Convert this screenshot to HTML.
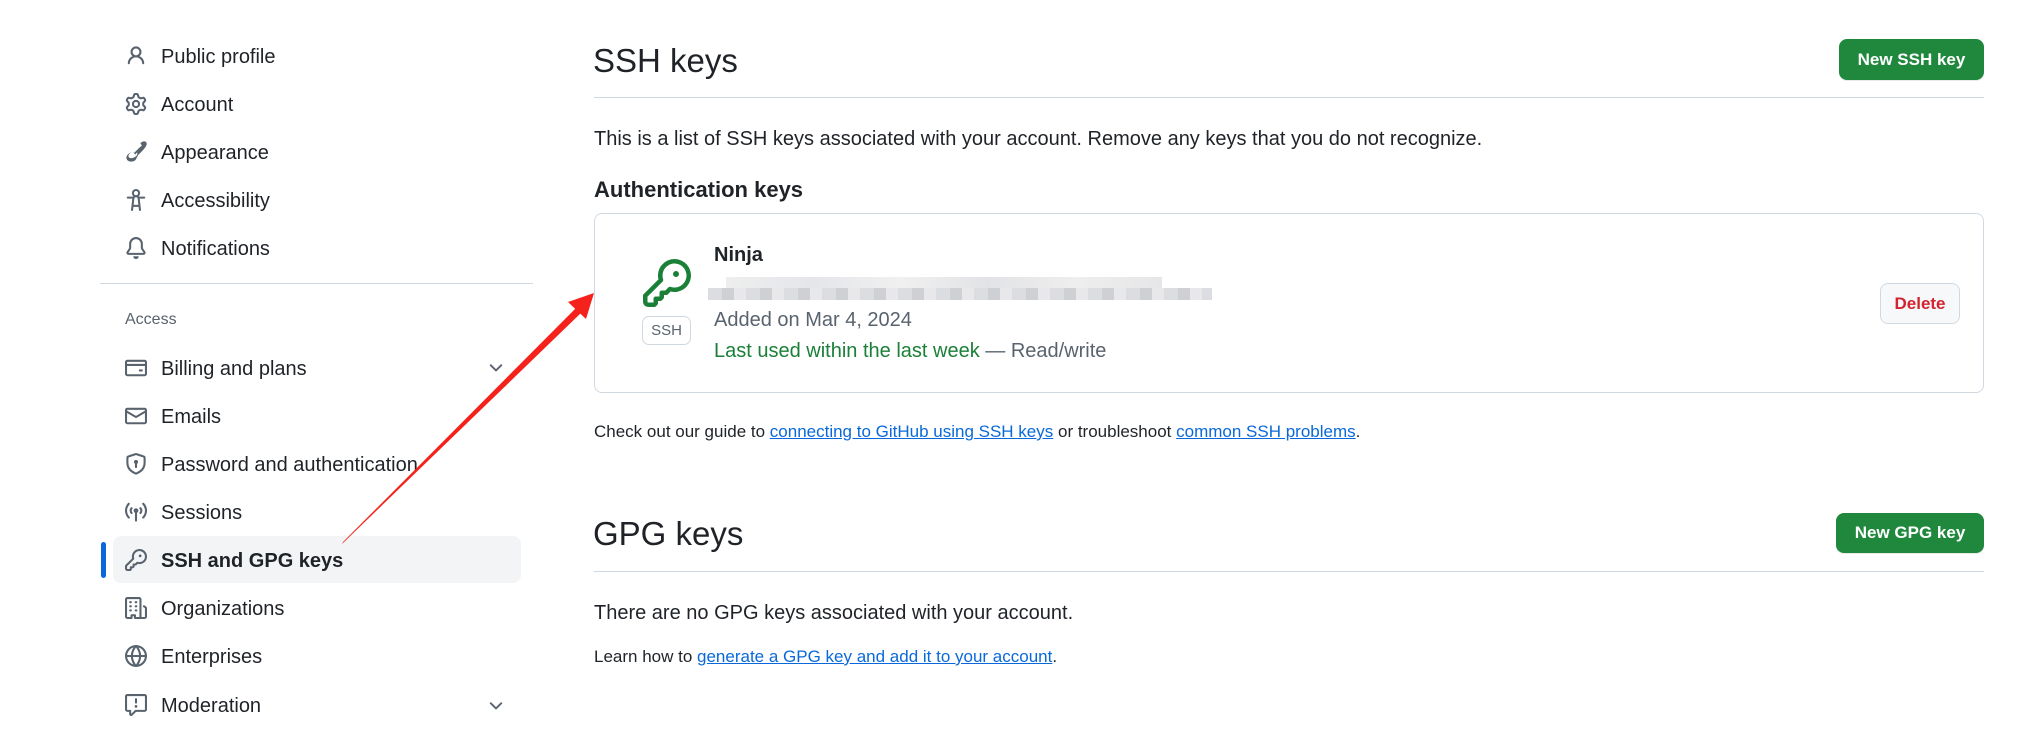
<!DOCTYPE html>
<html><head><meta charset="utf-8"><style>
*{margin:0;padding:0;box-sizing:border-box}
body{width:2032px;height:733px;background:#fff;font-family:"Liberation Sans",sans-serif;color:#1f2328;position:relative;overflow:hidden}
.a{position:absolute;white-space:nowrap}
.nav{position:absolute;left:161px;font-size:20px;line-height:24px;color:#1f2328}
.ic{position:absolute;left:125px;width:22px;height:22px}
.ic svg{width:22px;height:22px;fill:#59636e}
.btn{position:absolute;background:#1f883d;color:#fff;font-weight:bold;font-size:17px;border-radius:8px;display:flex;align-items:center;justify-content:center;box-shadow:0 1px 0 rgba(31,35,40,.1)}
a{color:#0969da;text-decoration:underline}
</style></head><body>

<div class="ic" style="top:45px"><svg viewBox="0 0 16 16"><path d="M10.561 8.073a6.005 6.005 0 0 1 3.432 5.142.75.75 0 1 1-1.498.07 4.5 4.5 0 0 0-8.99 0 .75.75 0 0 1-1.498-.07 6.004 6.004 0 0 1 3.431-5.142 3.999 3.999 0 1 1 5.123 0ZM10.5 5a2.5 2.5 0 1 0-5 0 2.5 2.5 0 0 0 5 0Z"/></svg></div>
<div class="nav" style="top:45px">Public profile</div>
<div class="ic" style="top:93px"><svg viewBox="0 0 16 16"><path d="M8 0a8.2 8.2 0 0 1 .701.031C9.444.095 9.99.645 10.16 1.29l.288 1.107c.018.066.079.158.212.224.231.114.454.243.668.386.123.082.233.09.299.071l1.103-.303c.644-.176 1.392.021 1.82.63.27.385.506.792.704 1.218.315.675.111 1.422-.364 1.891l-.814.806c-.049.048-.098.147-.088.294.016.257.016.515 0 .772-.01.147.038.246.088.294l.814.806c.475.469.679 1.216.364 1.891a7.977 7.977 0 0 1-.704 1.217c-.428.61-1.176.807-1.82.63l-1.102-.302c-.067-.019-.177-.011-.3.071a5.909 5.909 0 0 1-.668.386c-.133.066-.194.158-.211.224l-.29 1.106c-.168.646-.715 1.196-1.458 1.26a8.006 8.006 0 0 1-1.402 0c-.743-.064-1.289-.614-1.458-1.26l-.289-1.106c-.018-.066-.079-.158-.212-.224a5.738 5.738 0 0 1-.668-.386c-.123-.082-.233-.09-.299-.071l-1.103.303c-.644.176-1.392-.021-1.82-.63a8.12 8.12 0 0 1-.704-1.218c-.315-.675-.111-1.422.363-1.891l.815-.806c.05-.048.098-.147.088-.294a6.214 6.214 0 0 1 0-.772c.01-.147-.038-.246-.088-.294l-.815-.806C.635 6.045.431 5.298.746 4.623a7.92 7.92 0 0 1 .704-1.217c.428-.61 1.176-.807 1.82-.63l1.102.302c.067.019.177.011.3-.071.214-.143.437-.272.668-.386.133-.066.194-.158.211-.224l.29-1.106C6.009.645 6.556.095 7.299.03 7.53.01 7.764 0 8 0Zm-.571 1.525c-.036.003-.108.036-.137.146l-.289 1.105c-.147.561-.549.967-.998 1.189-.173.086-.34.183-.5.29-.417.278-.97.423-1.529.27l-1.103-.303c-.109-.03-.175.016-.195.045-.22.312-.412.644-.573.99-.014.031-.021.11.059.19l.815.806c.411.406.562.957.53 1.456a4.709 4.709 0 0 0 0 .582c.032.499-.119 1.05-.53 1.456l-.815.806c-.081.08-.073.159-.059.19.162.346.353.677.573.989.02.03.085.076.195.046l1.102-.303c.56-.153 1.113-.008 1.53.27.161.107.328.204.501.29.447.222.85.629.997 1.189l.289 1.105c.029.109.101.143.137.146a6.6 6.6 0 0 0 1.142 0c.036-.003.108-.036.137-.146l.289-1.105c.147-.561.549-.967.998-1.189.173-.086.34-.183.5-.29.417-.278.97-.423 1.529-.27l1.103.303c.109.029.175-.016.195-.045.22-.313.411-.644.573-.99.014-.031.021-.11-.059-.19l-.815-.806c-.411-.406-.562-.957-.53-1.456a4.709 4.709 0 0 0 0-.582c-.032-.499.119-1.05.53-1.456l.815-.806c.081-.08.073-.159.059-.19a6.464 6.464 0 0 0-.573-.989c-.02-.03-.085-.076-.195-.046l-1.102.303c-.56.153-1.113.008-1.53-.27a4.44 4.44 0 0 0-.501-.29c-.447-.222-.85-.629-.997-1.189l-.289-1.105c-.029-.11-.101-.143-.137-.146a6.6 6.6 0 0 0-1.142 0ZM11 8a3 3 0 1 1-6 0 3 3 0 0 1 6 0ZM9.5 8a1.5 1.5 0 1 0-3.001.001A1.5 1.5 0 0 0 9.5 8Z"/></svg></div>
<div class="nav" style="top:93px">Account</div>
<div class="ic" style="top:141px"><svg viewBox="0 0 16 16"><path d="M11.134 1.535c.7-.509 1.416-.942 2.076-1.155.649-.21 1.463-.267 2.069.34.603.601.568 1.411.368 2.07-.207.683-.646 1.428-1.157 2.146-1.021 1.435-2.45 2.889-3.408 3.753-.07.063-.135.126-.2.19l-.084.08-1.56 1.561a1 1 0 0 1-.33 1.001c-.063.061-.154.142-.264.237C8.27 13.89 6.617 15 4.5 15 2.396 15 .977 13.71 1 12.268c.015-.908.4-1.611.778-2.102.191-.249.383-.453.537-.609.082-.083.141-.14.184-.183.19-.19.31-.25.542-.412 1.019-.712 2.5-1.1 3.693-.373l1.556-1.556.072-.078c.064-.064.127-.129.191-.2.864-.958 2.318-2.387 3.753-3.408ZM7.59 9.8 6.2 8.41c-.72-.453-1.58-.24-2.25.233-.195.138-.228.184-.319.275-.032.032-.089.086-.17.167a5.3 5.3 0 0 0-.416.474c-.292.38-.53.845-.539 1.416-.009.577.637 1.525 1.994 1.525 1.517 0 2.76-.79 3.466-1.393.082-.07.14-.124.18-.162.039-.038.061-.06.066-.065.09-.092.136-.124.274-.32.472-.67.686-1.53.233-2.25Z"/></svg></div>
<div class="nav" style="top:141px">Appearance</div>
<div class="ic" style="top:189px"><svg viewBox="0 0 16 16"><path d="M9.923 5.302c.063.063.122.129.178.198H14A.75.75 0 0 1 14 7h-3.3l.578 5.163.362 2.997a.75.75 0 0 1-1.49.18L9.868 13H6.132l-.282 2.34a.75.75 0 0 1-1.49-.18l.362-2.997L5.3 7H2a.75.75 0 0 1 0-1.5h3.9a2.54 2.54 0 0 1 .176-.198 3 3 0 1 1 3.847 0ZM9.2 7.073h-.001a1.206 1.206 0 0 0-2.398 0L6.305 11.5h3.39ZM9.5 3a1.5 1.5 0 1 0-3.001.001A1.5 1.5 0 0 0 9.5 3Z"/></svg></div>
<div class="nav" style="top:189px">Accessibility</div>
<div class="ic" style="top:237px"><svg viewBox="0 0 16 16"><path d="M8 16a2 2 0 0 0 1.985-1.75c.017-.137-.097-.25-.235-.25h-3.5c-.138 0-.252.113-.235.25A2 2 0 0 0 8 16ZM3 5a5 5 0 0 1 10 0v2.947c0 .05.015.098.042.139l1.703 2.555A1.519 1.519 0 0 1 13.482 13H2.518a1.516 1.516 0 0 1-1.263-2.36l1.703-2.554A.255.255 0 0 0 3 7.947Zm5-3.5A3.5 3.5 0 0 0 4.5 5v2.947c0 .346-.102.683-.294.97l-1.703 2.556a.017.017 0 0 0-.003.01l.001.006c0 .002.002.004.004.006l.006.004.007.001h10.964l.007-.001.006-.004.004-.006.001-.007a.017.017 0 0 0-.003-.01l-1.703-2.554a1.745 1.745 0 0 1-.294-.97V5A3.5 3.5 0 0 0 8 1.5Z"/></svg></div>
<div class="nav" style="top:237px">Notifications</div>

<div class="a" style="left:100px;top:283px;width:433px;height:1px;background:#d1d9e0"></div>
<div class="a" style="left:125px;top:311px;font-size:16px;color:#59636e">Access</div>

<div class="ic" style="top:357px"><svg viewBox="0 0 16 16"><path d="M10.75 9a.75.75 0 0 0 0 1.5h1.5a.75.75 0 0 0 0-1.5h-1.5Z"/><path d="M0 3.75C0 2.784.784 2 1.75 2h12.5c.966 0 1.75.784 1.75 1.75v8.5A1.75 1.75 0 0 1 14.25 14H1.75A1.75 1.75 0 0 1 0 12.25ZM14.5 6.5h-13v5.75c0 .138.112.25.25.25h12.5a.25.25 0 0 0 .25-.25Zm0-2.75a.25.25 0 0 0-.25-.25H1.75a.25.25 0 0 0-.25.25V5h13Z"/></svg></div>
<div class="nav" style="top:357px">Billing and plans</div>
<div class="ic" style="top:405px"><svg viewBox="0 0 16 16"><path d="M1.75 2h12.5c.966 0 1.75.784 1.75 1.75v8.5A1.75 1.75 0 0 1 14.25 14H1.75A1.75 1.75 0 0 1 0 12.25v-8.5C0 2.784.784 2 1.75 2ZM1.5 12.251c0 .138.112.25.25.25h12.5a.25.25 0 0 0 .25-.25V5.809L8.38 9.397a.75.75 0 0 1-.76 0L1.5 5.809v6.442Zm13-8.181v-.32a.25.25 0 0 0-.25-.25H1.75a.25.25 0 0 0-.25.25v.32L8 7.88Z"/></svg></div>
<div class="nav" style="top:405px">Emails</div>
<div class="ic" style="top:453px"><svg viewBox="0 0 16 16"><path d="m8.533.133 5.25 1.68A1.75 1.75 0 0 1 15 3.48V7c0 1.566-.32 3.182-1.303 4.682-.983 1.498-2.585 2.813-5.032 3.855a1.697 1.697 0 0 1-1.33 0c-2.447-1.042-4.049-2.357-5.032-3.855C1.32 10.182 1 8.566 1 7V3.48a1.755 1.755 0 0 1 1.217-1.667l5.25-1.68a1.748 1.748 0 0 1 1.066 0Zm-.61 1.429.001.001-5.25 1.68a.251.251 0 0 0-.174.237V7c0 1.36.275 2.666 1.057 3.859.784 1.194 2.121 2.342 4.366 3.298a.196.196 0 0 0 .154 0c2.245-.957 3.582-2.103 4.366-3.297C13.225 9.666 13.5 8.358 13.5 7V3.48a.25.25 0 0 0-.174-.238l-5.25-1.68a.25.25 0 0 0-.153 0ZM9.5 6.5c0 .536-.286 1.032-.75 1.3v2.45a.75.75 0 0 1-1.5 0V7.8A1.5 1.5 0 1 1 9.5 6.5Z"/></svg></div>
<div class="nav" style="top:453px">Password and authentication</div>
<div class="ic" style="top:501px"><svg viewBox="0 0 16 16"><path d="M3.267 1.457c.3.286.312.76.026 1.06A6.475 6.475 0 0 0 1.5 7a6.472 6.472 0 0 0 1.793 4.483.75.75 0 0 1-1.086 1.034A7.971 7.971 0 0 1 0 7c0-2.139.84-4.083 2.207-5.517a.75.75 0 0 1 1.06-.026Zm9.466 0a.75.75 0 0 1 1.06.026A7.975 7.975 0 0 1 16 7c0 2.139-.84 4.083-2.207 5.517a.75.75 0 1 1-1.086-1.034A6.475 6.475 0 0 0 14.5 7a6.475 6.475 0 0 0-1.793-4.483.75.75 0 0 1 .026-1.06ZM8.75 8.582v5.668a.75.75 0 0 1-1.5 0V8.582a1.75 1.75 0 1 1 1.5 0ZM5.331 4.736c.3.287.311.76.025 1.06-.303.317-.49.746-.49 1.219s.187.902.49 1.219a.75.75 0 0 1-1.085 1.036A3.25 3.25 0 0 1 3.366 7.015c0-.874.345-1.668.905-2.254a.75.75 0 0 1 1.06-.025Zm5.338 0a.75.75 0 0 1 1.06.025c.56.586.905 1.38.905 2.254 0 .874-.345 1.668-.905 2.254a.75.75 0 0 1-1.085-1.036c.303-.317.49-.746.49-1.218 0-.473-.187-.902-.49-1.22a.75.75 0 0 1 .025-1.06Z"/></svg></div>
<div class="nav" style="top:501px">Sessions</div>

<div class="a" style="left:113px;top:536px;width:408px;height:47px;background:#f3f4f6;border-radius:8px"></div>
<div class="a" style="left:101px;top:542px;width:5px;height:36px;background:#0969da;border-radius:4px"></div>
<div class="ic" style="top:549px"><svg viewBox="0 0 16 16"><path d="M10.5 0a5.499 5.499 0 1 1-1.288 10.848l-.932.932a.749.749 0 0 1-.53.22H7v.75a.749.749 0 0 1-.22.53l-.5.5a.749.749 0 0 1-.53.22H5v.75a.749.749 0 0 1-.22.53l-.5.5a.749.749 0 0 1-.53.22h-2A1.75 1.75 0 0 1 0 14.25v-2c0-.199.079-.389.22-.53l4.932-4.932A5.5 5.5 0 0 1 10.5 0Zm-4 5.5c-.001.431.069.86.205 1.269a.75.75 0 0 1-.181.768L1.5 12.56v1.69c0 .138.112.25.25.25h1.69l.06-.06v-1.19a.75.75 0 0 1 .75-.75h1.19l.06-.06v-1.19a.75.75 0 0 1 .75-.75h1.19l1.023-1.025a.75.75 0 0 1 .768-.18A4 4 0 1 0 6.5 5.5ZM11 6a1 1 0 1 1 0-2 1 1 0 0 1 0 2Z"/></svg></div>
<div class="nav" style="top:549px;font-weight:bold">SSH and GPG keys</div>
<div class="ic" style="top:597px"><svg viewBox="0 0 16 16"><path d="M1.75 16A1.75 1.75 0 0 1 0 14.25V1.75C0 .784.784 0 1.75 0h8.5C11.216 0 12 .784 12 1.75v12.5c0 .085-.006.168-.018.25h2.268a.25.25 0 0 0 .25-.25V8.285a.25.25 0 0 0-.111-.208l-1.055-.703a.749.749 0 1 1 .832-1.248l1.055.703c.487.325.779.871.779 1.456v5.965A1.75 1.75 0 0 1 14.25 16h-3.5a.766.766 0 0 1-.197-.026c-.099.017-.2.026-.303.026h-3a.75.75 0 0 1-.75-.75V14h-1v1.25a.75.75 0 0 1-.75.75Zm-.25-1.75c0 .138.112.25.25.25H4v-1.25a.75.75 0 0 1 .75-.75h2.5a.75.75 0 0 1 .75.75v1.25h2.25a.25.25 0 0 0 .25-.25V1.75a.25.25 0 0 0-.25-.25h-8.5a.25.25 0 0 0-.25.25ZM3.75 6h.5a.75.75 0 0 1 0 1.5h-.5a.75.75 0 0 1 0-1.5ZM3 3.75A.75.75 0 0 1 3.75 3h.5a.75.75 0 0 1 0 1.5h-.5A.75.75 0 0 1 3 3.75Zm4 3A.75.75 0 0 1 7.75 6h.5a.75.75 0 0 1 0 1.5h-.5A.75.75 0 0 1 7 6.75ZM7.75 3h.5a.75.75 0 0 1 0 1.5h-.5a.75.75 0 0 1 0-1.5ZM3 9.75A.75.75 0 0 1 3.75 9h.5a.75.75 0 0 1 0 1.5h-.5A.75.75 0 0 1 3 9.75ZM7.75 9h.5a.75.75 0 0 1 0 1.5h-.5a.75.75 0 0 1 0-1.5Z"/></svg></div>
<div class="nav" style="top:597px">Organizations</div>
<div class="ic" style="top:645px"><svg viewBox="0 0 16 16"><path d="M8 0a8 8 0 1 1 0 16A8 8 0 0 1 8 0ZM5.78 8.75a9.64 9.64 0 0 0 1.363 4.177c.255.426.542.832.857 1.215.245-.296.551-.705.857-1.215A9.64 9.64 0 0 0 10.22 8.75Zm4.44-1.5a9.64 9.64 0 0 0-1.363-4.177c-.307-.51-.612-.919-.857-1.215a9.927 9.927 0 0 0-.857 1.215A9.64 9.64 0 0 0 5.78 7.25Zm-5.944 1.5H1.543a6.507 6.507 0 0 0 4.666 5.5c-.123-.181-.24-.365-.352-.552-.715-1.192-1.437-2.874-1.581-4.948Zm-2.733-1.5h2.733c.144-2.074.866-3.756 1.58-4.948.12-.197.237-.381.353-.552a6.507 6.507 0 0 0-4.666 5.5Zm10.181 1.5c-.144 2.074-.866 3.756-1.58 4.948-.12.197-.237.381-.353.552a6.507 6.507 0 0 0 4.666-5.5Zm2.733-1.5a6.507 6.507 0 0 0-4.666-5.5c.123.181.24.365.353.552.714 1.192 1.436 2.874 1.58 4.948Z"/></svg></div>
<div class="nav" style="top:645px">Enterprises</div>
<div class="ic" style="top:694px"><svg viewBox="0 0 16 16"><path d="M0 1.75C0 .784.784 0 1.75 0h12.5C15.216 0 16 .784 16 1.75v9.5A1.75 1.75 0 0 1 14.25 13H8.06l-2.573 2.573A1.458 1.458 0 0 1 3 14.543V13H1.750A1.75 1.75 0 0 1 0 11.25Zm1.75-.25a.25.25 0 0 0-.25.25v9.5c0 .138.112.25.25.25h2a.75.75 0 0 1 .75.75v2.19l2.72-2.72a.749.749 0 0 1 .53-.22h6.5a.25.25 0 0 0 .25-.25v-9.5a.25.25 0 0 0-.25-.25Zm7 2.25v2.5a.75.75 0 0 1-1.5 0v-2.5a.75.75 0 0 1 1.5 0ZM9 9a1 1 0 1 1-2 0 1 1 0 0 1 2 0Z"/></svg></div>
<div class="nav" style="top:694px">Moderation</div>

<svg class="a" style="left:486px;top:358px" width="20" height="20" viewBox="0 0 16 16"><path d="M12.78 5.22a.749.749 0 0 1 0 1.06l-4.25 4.25a.749.749 0 0 1-1.06 0L3.22 6.28a.749.749 0 1 1 1.06-1.06L8 8.939l3.72-3.719a.749.749 0 0 1 1.06 0Z" fill="#59636e"/></svg>
<svg class="a" style="left:486px;top:696px" width="20" height="20" viewBox="0 0 16 16"><path d="M12.78 5.22a.749.749 0 0 1 0 1.06l-4.25 4.25a.749.749 0 0 1-1.06 0L3.22 6.28a.749.749 0 1 1 1.06-1.06L8 8.939l3.72-3.719a.749.749 0 0 1 1.06 0Z" fill="#59636e"/></svg>

<div class="a" style="left:593px;top:41px;font-size:33px;line-height:40px">SSH keys</div>
<div class="btn" style="left:1839px;top:39px;width:145px;height:41px">New SSH key</div>
<div class="a" style="left:594px;top:97px;width:1390px;height:1px;background:#d1d9e0"></div>
<div class="a" style="left:594px;top:127px;font-size:20px;line-height:24px">This is a list of SSH keys associated with your account. Remove any keys that you do not recognize.</div>
<div class="a" style="left:594px;top:177px;font-size:22px;line-height:26px;font-weight:bold">Authentication keys</div>

<div class="a" style="left:594px;top:213px;width:1390px;height:180px;border:1px solid #d1d9e0;border-radius:8px"></div>
<svg class="a" style="left:640px;top:259px" width="54" height="48" viewBox="0 0 16 16"><path fill="#1a7f37" d="M10.5 0a5.499 5.499 0 1 1-1.288 10.848l-.932.932a.749.749 0 0 1-.53.22H7v.75a.749.749 0 0 1-.22.53l-.5.5a.749.749 0 0 1-.53.22H5v.75a.749.749 0 0 1-.22.53l-.5.5a.749.749 0 0 1-.53.22h-2A1.75 1.75 0 0 1 0 14.25v-2c0-.199.079-.389.22-.53l4.932-4.932A5.5 5.5 0 0 1 10.5 0Zm-4 5.5c-.001.431.069.86.205 1.269a.75.75 0 0 1-.181.768L1.5 12.56v1.69c0 .138.112.25.25.25h1.69l.06-.06v-1.19a.75.75 0 0 1 .75-.75h1.19l.06-.06v-1.19a.75.75 0 0 1 .75-.75h1.19l1.023-1.025a.75.75 0 0 1 .768-.18A4 4 0 1 0 6.5 5.5ZM11 6a1 1 0 1 1 0-2 1 1 0 0 1 0 2Z"/></svg>
<div class="a" style="left:642px;top:316px;width:49px;height:29px;border:1px solid #d1d9e0;border-radius:7px;font-size:15px;color:#59636e;display:flex;align-items:center;justify-content:center">SSH</div>
<div class="a" style="left:714px;top:243px;font-size:20px;font-weight:bold;line-height:24px">Ninja</div>
<div class="a" style="left:726px;top:277px;width:436px;height:11px;background:linear-gradient(90deg,#eee,#e4e6ea 20%,#f0f0f0 40%,#e2e3e6 60%,#eee 80%,#e6e6e8)"></div>
<div class="a" style="left:708px;top:288px;width:504px;height:12px;background:repeating-linear-gradient(90deg,#dcdde0 0 14px,#cfd0d3 14px 26px,#e8e8ea 26px 38px)"></div>
<div class="a" style="left:714px;top:308px;font-size:20px;line-height:24px;color:#59636e">Added on Mar 4, 2024</div>
<div class="a" style="left:714px;top:339px;font-size:20px;line-height:24px;color:#1a7f37">Last used within the last week <span style="color:#59636e">— Read/write</span></div>
<div class="a" style="left:1880px;top:283px;width:80px;height:41px;background:#f6f8fa;border:1px solid #d1d9e0;border-radius:8px;color:#d1242f;font-size:17px;font-weight:bold;display:flex;align-items:center;justify-content:center">Delete</div>

<div class="a" style="left:594px;top:421px;font-size:17px;line-height:22px">Check out our guide to <a>connecting to GitHub using SSH keys</a> or troubleshoot <a>common SSH problems</a>.</div>

<div class="a" style="left:593px;top:514px;font-size:33px;line-height:40px">GPG keys</div>
<div class="btn" style="left:1836px;top:513px;width:148px;height:40px">New GPG key</div>
<div class="a" style="left:594px;top:571px;width:1390px;height:1px;background:#d1d9e0"></div>
<div class="a" style="left:594px;top:601px;font-size:20px;line-height:24px">There are no GPG keys associated with your account.</div>
<div class="a" style="left:594px;top:646px;font-size:17px;line-height:22px">Learn how to <a>generate a GPG key and add it to your account</a>.</div>

<svg class="a" style="left:0;top:0" width="2032" height="733">
<polygon points="342,544 343,542 578,306 582,312" fill="#f5221b"/>
<polygon points="594,293 568,302 586,319" fill="#f5221b"/>
</svg>
</body></html>
